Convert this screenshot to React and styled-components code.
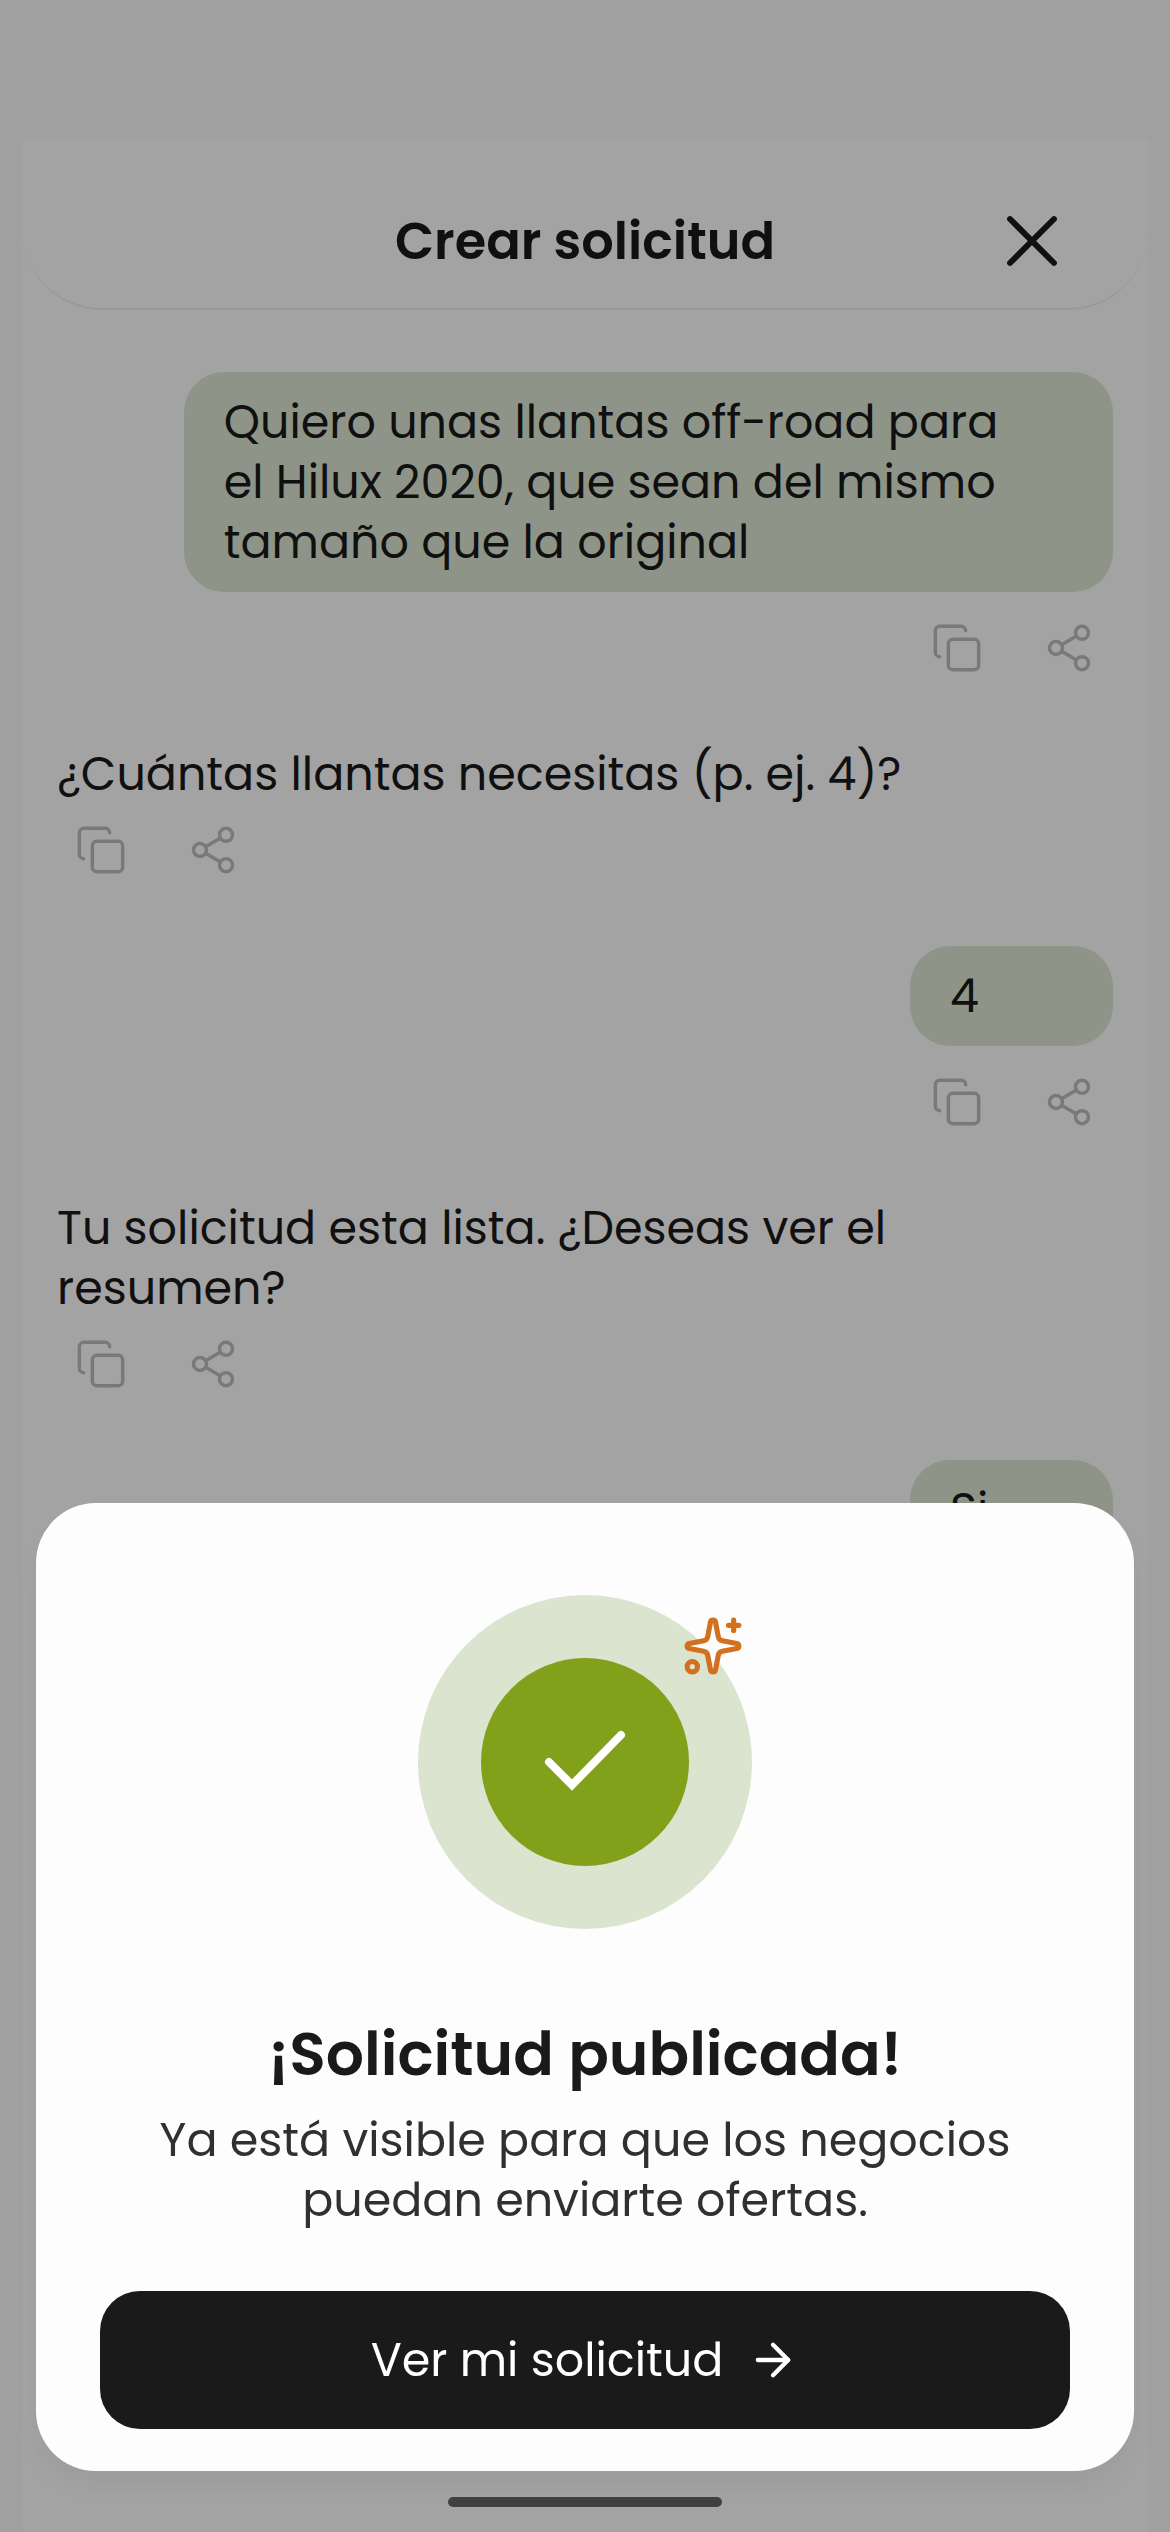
import React from "react";
import styled, { createGlobalStyle } from "styled-components";
import { ArrowRight, Copy, Share2, X } from "lucide-react";

const style = {
  font: `Poppins, Inter, "Liberation Sans", sans-serif`,
  ink: "#1a1a1a",
  page: "#fafafa",
  surface: "#ffffff",
  bubble: "#dfe9d5",
  icon: "#bebebe",
  green: "#80a119",
  ring: "#dae4cf",
  orange: "#d3701e",
};

const GlobalStyle = createGlobalStyle`
  * {
    box-sizing: border-box;
  }
  body {
    margin: 0;
    background: ${style.page};
    color: ${style.ink};
    font-family: ${style.font};
    font-size: 46px;
    line-height: 60px;
  }
  button {
    font: inherit;
    color: inherit;
    background: none;
    border: 0;
    padding: 0;
    cursor: pointer;
  }
  svg {
    display: block;
  }
`;

const Screen = styled.div`
  min-height: 100vh;
  padding: 140px 22px 0;
`;

const Sheet = styled.div`
  min-height: calc(100vh - 140px);
  background: ${style.surface};
`;

const Header = styled.header`
  display: grid;
  grid-template-columns: 1fr auto 1fr;
  align-items: center;
  height: 170px;
  padding: 34px 72px 0;
  border-bottom: 2px solid #f0f0f0;
  border-radius: 0 0 80px 80px;

  h1 {
    grid-column: 2;
    margin: 0;
    font-size: 51px;
    font-weight: 600;
    line-height: 60px;
  }
  button {
    justify-self: end;
  }
`;

const Chat = styled.main`
  display: flex;
  flex-direction: column;
  gap: 70px;
  padding: 62px 35px;
`;

const MessageRow = styled.article`
  display: flex;
  flex-direction: column;
  align-items: ${(props) => (props.$mine ? "flex-end" : "flex-start")};
  gap: ${(props) => (props.$mine ? "30px" : "20px")};
`;

const Bubble = styled.p`
  margin: 0;
  min-width: 203px;
  max-width: 88%;
  padding: 20px 100px 20px 40px;
  border-radius: 40px;
  background: ${style.bubble};
`;

const Reply = styled.p`
  margin: 0;
  max-width: 88%;
`;

const Actions = styled.div`
  display: flex;
  gap: 60px;
  padding: 0 18px;
  color: ${style.icon};
`;

const Backdrop = styled.div`
  position: fixed;
  inset: 0;
  display: flex;
  flex-direction: column;
  justify-content: flex-end;
  padding: 0 36px 25px;
  background: rgba(0, 0, 0, 0.36);
`;

const Dialog = styled.section`
  display: flex;
  flex-direction: column;
  align-items: center;
  padding: 92px 64px 42px;
  border-radius: 60px;
  background: #fdfdfd;
  box-shadow: 0 16px 32px rgba(0, 0, 0, 0.05);
  text-align: center;

  h2 {
    margin: 85px 0 16px;
    font-size: 60px;
    font-weight: 600;
    line-height: 80px;
  }
  p {
    margin: 0 0 61px;
    color: #303030;
  }
`;

const Badge = styled.div`
  position: relative;
  display: grid;
  place-items: center;
  width: 334px;
  height: 334px;
  border-radius: 50%;
  background: ${style.ring};
`;

const BadgeCore = styled.div`
  display: grid;
  place-items: center;
  width: 208px;
  height: 208px;
  border-radius: 50%;
  background: ${style.green};
`;

const SparkleIcon = styled.svg`
  position: absolute;
  top: 20px;
  right: 8px;
  width: 62px;
  height: 62px;
`;

const PrimaryButton = styled.button`
  display: flex;
  align-items: center;
  justify-content: center;
  gap: 24px;
  width: 100%;
  height: 138px;
  border-radius: 40px;
  && {
    background: ${style.ink};
    color: #fff;
  }
`;

const HomeIndicator = styled.div`
  align-self: center;
  width: 274px;
  height: 10px;
  margin-top: 26px;
  border-radius: 5px;
  background: #404040;
`;

const messages = [
  {
    id: 1,
    mine: true,
    text: "Quiero unas llantas off-road para el Hilux 2020, que sean del mismo tamaño que la original",
  },
  { id: 2, mine: false, text: "¿Cuántas llantas necesitas (p. ej. 4)?" },
  { id: 3, mine: true, text: "4" },
  {
    id: 4,
    mine: false,
    text: "Tu solicitud esta lista. ¿Deseas ver el resumen?",
  },
  { id: 5, mine: true, text: "Si" },
];

function Message({ mine, text }) {
  return (
    <MessageRow $mine={mine}>
      {mine ? <Bubble>{text}</Bubble> : <Reply>{text}</Reply>}
      <Actions>
        <button type="button" aria-label="Copiar">
          <Copy size={52} strokeWidth={1.6} />
        </button>
        <button type="button" aria-label="Compartir">
          <Share2 size={52} strokeWidth={1.6} />
        </button>
      </Actions>
    </MessageRow>
  );
}

function SuccessBadge() {
  return (
    <Badge>
      <BadgeCore>
        <svg width="88" height="72" viewBox="0 0 88 72" fill="none">
          <path
            d="M8 36 L31 59 L80 9"
            stroke="#fff"
            strokeWidth="8"
            strokeLinecap="round"
          />
        </svg>
      </BadgeCore>
      <SparkleIcon
        viewBox="0 0 24 24"
        fill="none"
        stroke={style.orange}
        strokeWidth="2"
        strokeLinecap="round"
        strokeLinejoin="round"
      >
        <path
          fill="#fdfdfd"
          d="M11.017 2.814a1 1 0 0 1 1.966 0l1.051 5.558a2 2 0 0 0 1.594 1.594l5.558 1.051a1 1 0 0 1 0 1.966l-5.558 1.051a2 2 0 0 0-1.594 1.594l-1.051 5.558a1 1 0 0 1-1.966 0l-1.051-5.558a2 2 0 0 0-1.594-1.594l-5.558-1.051a1 1 0 0 1 0-1.966l5.558-1.051a2 2 0 0 0 1.594-1.594z"
        />
        <path d="M20 2v4M22 4h-4" />
        <circle cx="4" cy="20" r="2" />
      </SparkleIcon>
    </Badge>
  );
}

function App() {
  return (
    <>
      <GlobalStyle />
      <Screen>
        <Sheet>
          <Header>
            <h1>Crear solicitud</h1>
            <button type="button" aria-label="Cerrar">
              <X size={88} strokeWidth={1.6} />
            </button>
          </Header>
          <Chat>
            {messages.map((message) => (
              <Message key={message.id} {...message} />
            ))}
          </Chat>
        </Sheet>
      </Screen>
      <Backdrop>
        <Dialog role="dialog" aria-modal="true" aria-labelledby="dialog-title">
          <SuccessBadge />
          <h2 id="dialog-title">¡Solicitud publicada!</h2>
          <p>
            Ya está visible para que los negocios puedan enviarte ofertas.
          </p>
          <PrimaryButton type="button">
            Ver mi solicitud
            <ArrowRight size={52} />
          </PrimaryButton>
        </Dialog>
        <HomeIndicator />
      </Backdrop>
    </>
  );
}

export default App;
